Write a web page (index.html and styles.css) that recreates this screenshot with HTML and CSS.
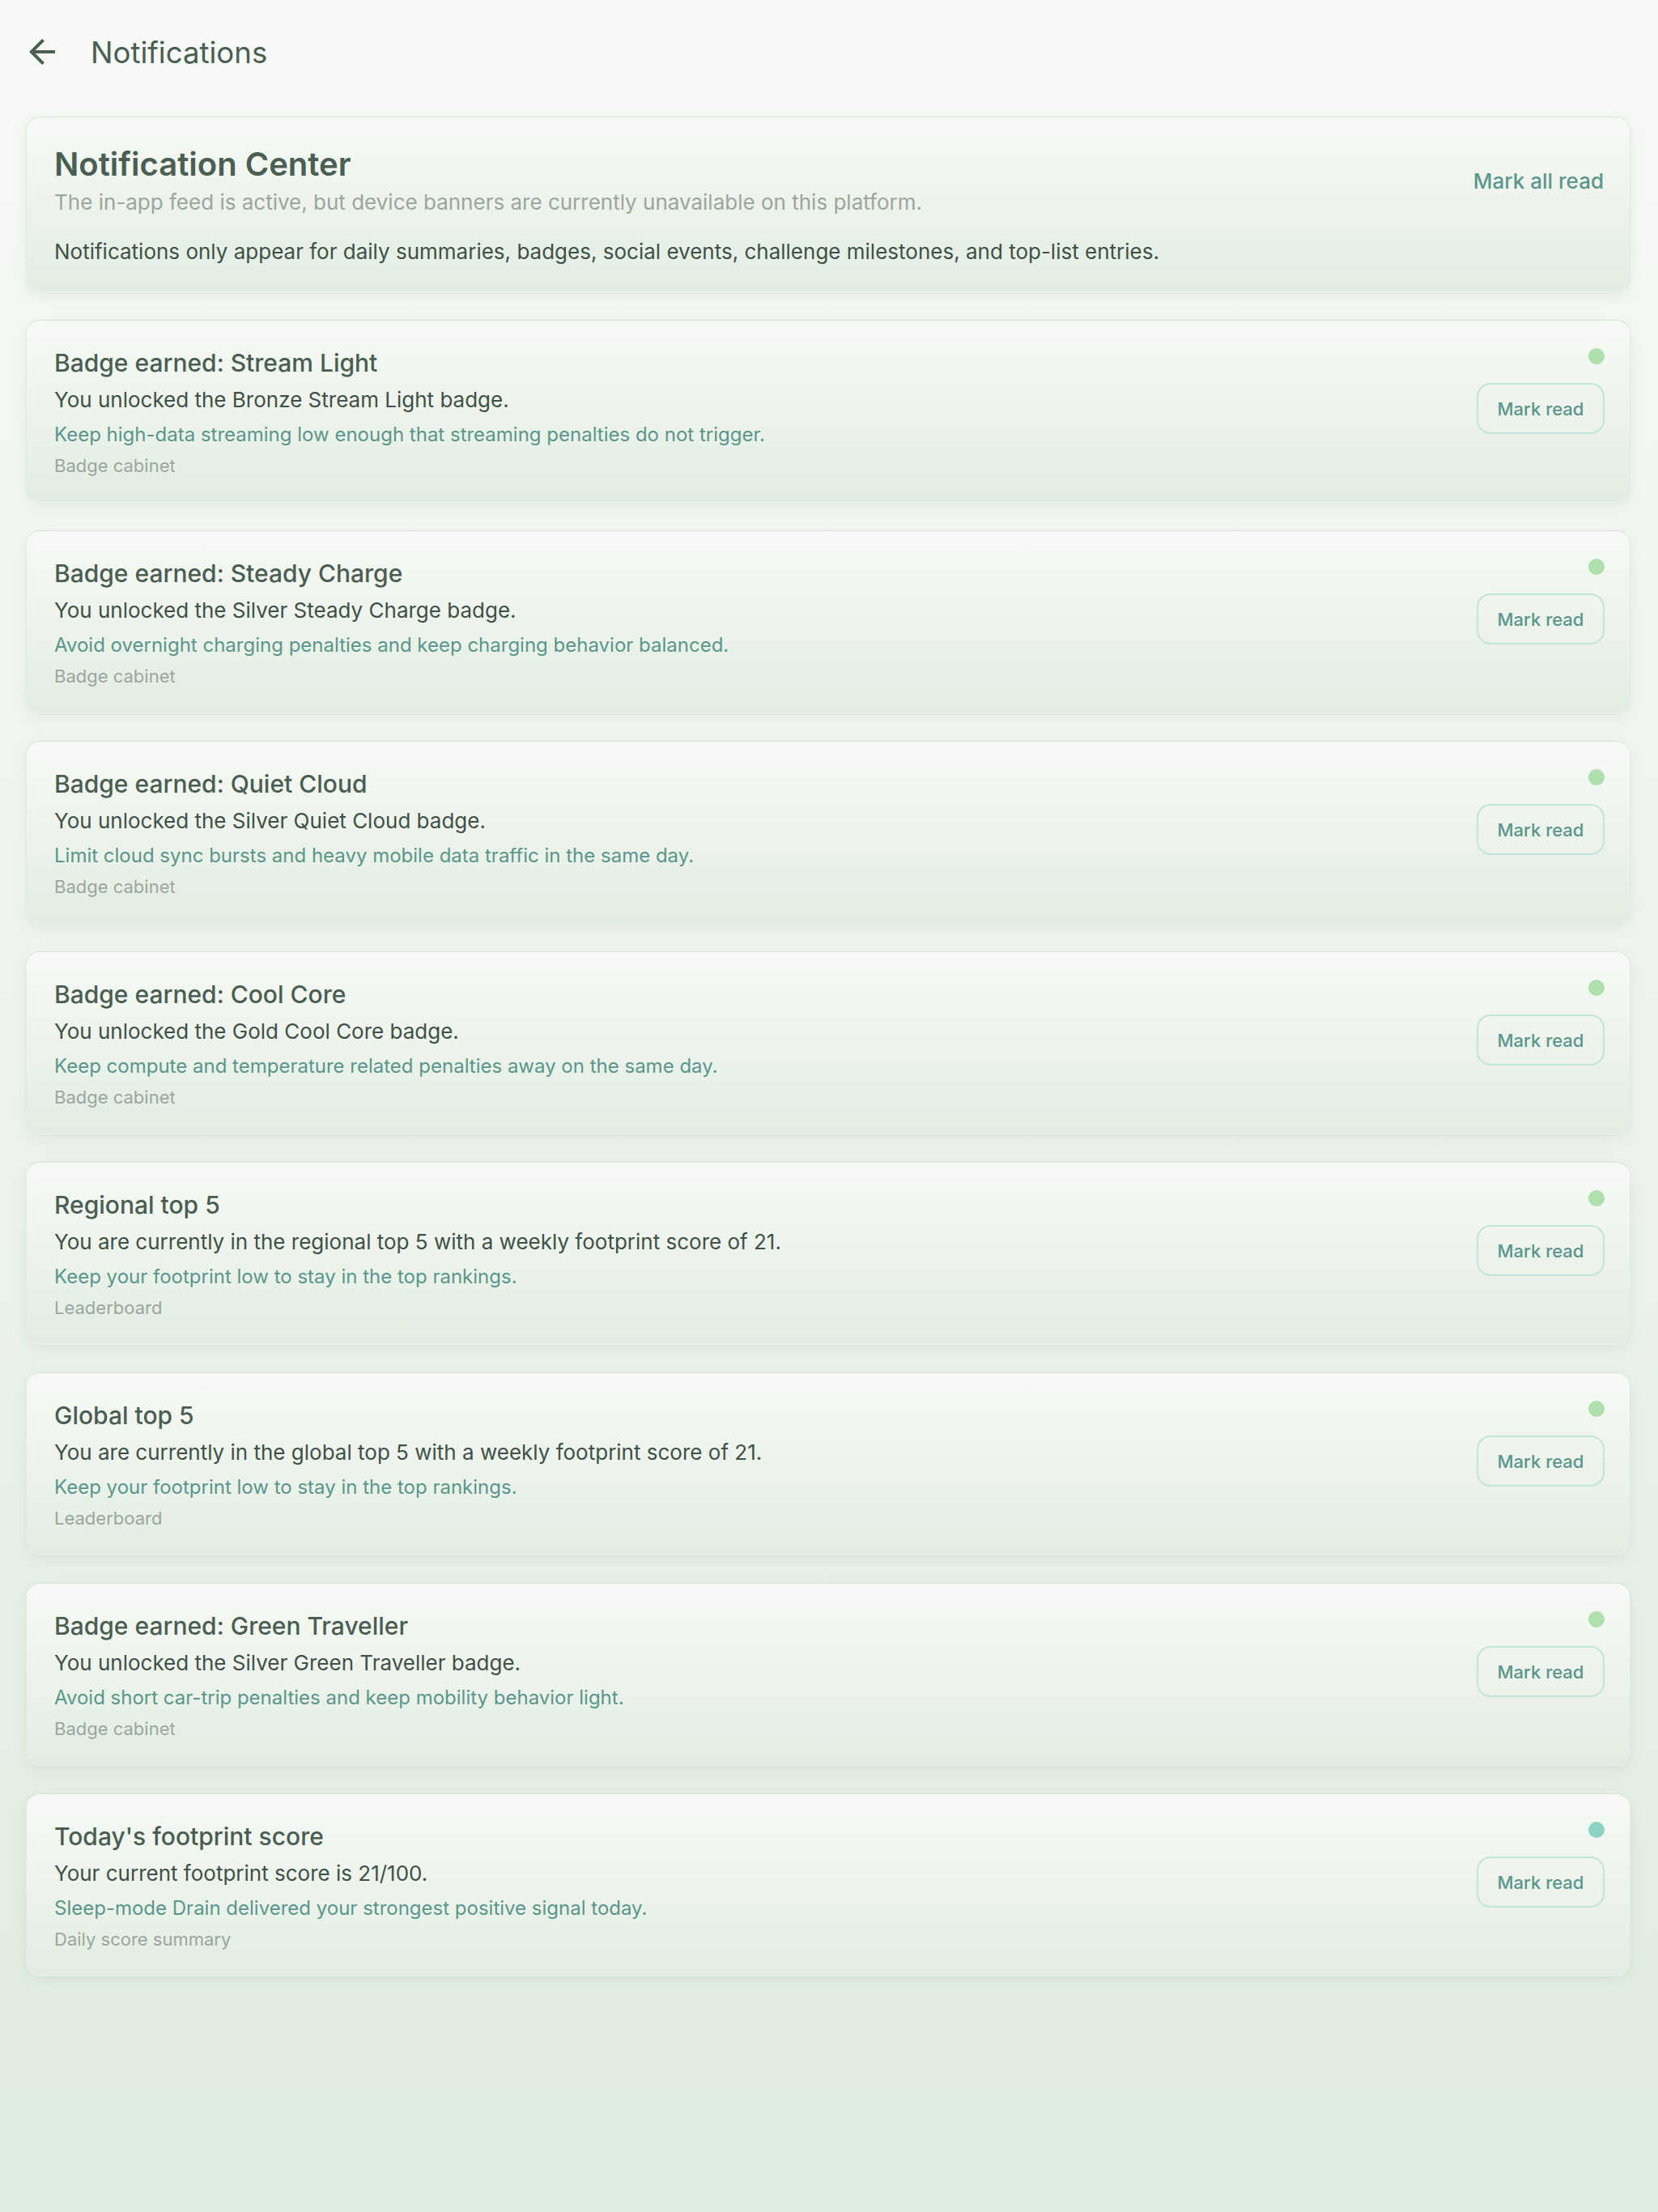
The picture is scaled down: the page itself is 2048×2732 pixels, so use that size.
FILE: index.html
```html
<!DOCTYPE html>
<html lang="en">
<head>
<meta charset="utf-8">
<title>Notifications</title>
<link rel="stylesheet" href="styles.css">
</head>
<body>
<div class="page">
  <header class="appbar">
    <button class="back" aria-label="Back">
      <svg viewBox="0 0 24 24" width="48" height="48"><path d="M20 11H7.83l5.59-5.59L12 4l-8 8 8 8 1.41-1.41L7.83 13H20v-2z" fill="currentColor"/></svg>
    </button>
    <h1 class="appbar-title">Notifications</h1>
  </header>

  <main class="list">
    <section class="card intro">
      <div class="intro-top">
        <div class="intro-text">
          <h2 class="intro-title">Notification Center</h2>
          <p class="intro-sub">The in-app feed is active, but device banners are currently unavailable on this platform.</p>
        </div>
        <button class="link-btn">Mark all read</button>
      </div>
      <p class="intro-body">Notifications only appear for daily summaries, badges, social events, challenge milestones, and top-list entries.</p>
    </section>

    <article class="card note">
      <div class="note-main">
        <h3 class="note-title">Badge earned: Stream Light</h3>
        <p class="note-body">You unlocked the Bronze Stream Light badge.</p>
        <p class="note-hint">Keep high-data streaming low enough that streaming penalties do not trigger.</p>
        <p class="note-meta">Badge cabinet</p>
      </div>
      <div class="note-side"><span class="dot"></span><button class="mark-btn">Mark read</button></div>
    </article>

    <article class="card note">
      <div class="note-main">
        <h3 class="note-title">Badge earned: Steady Charge</h3>
        <p class="note-body">You unlocked the Silver Steady Charge badge.</p>
        <p class="note-hint">Avoid overnight charging penalties and keep charging behavior balanced.</p>
        <p class="note-meta">Badge cabinet</p>
      </div>
      <div class="note-side"><span class="dot"></span><button class="mark-btn">Mark read</button></div>
    </article>

    <article class="card note">
      <div class="note-main">
        <h3 class="note-title">Badge earned: Quiet Cloud</h3>
        <p class="note-body">You unlocked the Silver Quiet Cloud badge.</p>
        <p class="note-hint">Limit cloud sync bursts and heavy mobile data traffic in the same day.</p>
        <p class="note-meta">Badge cabinet</p>
      </div>
      <div class="note-side"><span class="dot"></span><button class="mark-btn">Mark read</button></div>
    </article>

    <article class="card note">
      <div class="note-main">
        <h3 class="note-title">Badge earned: Cool Core</h3>
        <p class="note-body">You unlocked the Gold Cool Core badge.</p>
        <p class="note-hint">Keep compute and temperature related penalties away on the same day.</p>
        <p class="note-meta">Badge cabinet</p>
      </div>
      <div class="note-side"><span class="dot"></span><button class="mark-btn">Mark read</button></div>
    </article>

    <article class="card note">
      <div class="note-main">
        <h3 class="note-title">Regional top 5</h3>
        <p class="note-body">You are currently in the regional top 5 with a weekly footprint score of 21.</p>
        <p class="note-hint">Keep your footprint low to stay in the top rankings.</p>
        <p class="note-meta">Leaderboard</p>
      </div>
      <div class="note-side"><span class="dot"></span><button class="mark-btn">Mark read</button></div>
    </article>

    <article class="card note">
      <div class="note-main">
        <h3 class="note-title">Global top 5</h3>
        <p class="note-body">You are currently in the global top 5 with a weekly footprint score of 21.</p>
        <p class="note-hint">Keep your footprint low to stay in the top rankings.</p>
        <p class="note-meta">Leaderboard</p>
      </div>
      <div class="note-side"><span class="dot"></span><button class="mark-btn">Mark read</button></div>
    </article>

    <article class="card note">
      <div class="note-main">
        <h3 class="note-title">Badge earned: Green Traveller</h3>
        <p class="note-body">You unlocked the Silver Green Traveller badge.</p>
        <p class="note-hint">Avoid short car-trip penalties and keep mobility behavior light.</p>
        <p class="note-meta">Badge cabinet</p>
      </div>
      <div class="note-side"><span class="dot"></span><button class="mark-btn">Mark read</button></div>
    </article>

    <article class="card note">
      <div class="note-main">
        <h3 class="note-title">Today's footprint score</h3>
        <p class="note-body">Your current footprint score is 21/100.</p>
        <p class="note-hint">Sleep-mode Drain delivered your strongest positive signal today.</p>
        <p class="note-meta">Daily score summary</p>
      </div>
      <div class="note-side"><span class="dot dot-teal"></span><button class="mark-btn">Mark read</button></div>
    </article>
  </main>
</div>
</body>
</html>
```

FILE: styles.css
```css
* { box-sizing: border-box; }

html, body {
  margin: 0;
  padding: 0;
}

body {
  min-height: 100vh;
  background: linear-gradient(180deg, #f7f9f6 0%, #eef4ed 45%, #dfece0 100%);
  font-family: Inter, "Noto Sans", "Liberation Sans", sans-serif;
  color: #3f5047;
}

.page {
  min-height: 100vh;
}

.appbar {
  height: 128px;
  display: flex;
  align-items: center;
  padding-left: 28px;
}

.back {
  width: 48px;
  height: 48px;
  padding: 0;
  border: 0;
  background: none;
  color: #4a5e52;
  display: flex;
  align-items: center;
  justify-content: center;
}

.back svg { display: block; }

.appbar-title {
  margin: 2px 0 0 36px;
  font-size: 36.6px;
  line-height: 45px;
  font-weight: 400;
  color: #4a5e52;
}

.list {
  padding: 16px 34px 80px 32px;
  display: flex;
  flex-direction: column;
  gap: 34px;
}

.card {
  border-radius: 17px;
  border: 1px solid #e2ebe3;
  border-top-color: #d5e6d8;
  border-bottom-color: #edf0ed;
  background: linear-gradient(180deg, #f7f9f6 0%, #eef4ed 45%, #e1ede2 100%);
  box-shadow: 0 6px 20px rgba(70, 105, 80, 0.07), 0 1px 3px rgba(70, 105, 80, 0.05);
}

/* intro card */
.intro {
  padding: 33px 32px 33px 34px;
}

.intro-top {
  display: flex;
  align-items: center;
  justify-content: space-between;
}

.intro-title {
  margin: 0;
  font-size: 40px;
  line-height: 49px;
  font-weight: 600;
  color: #4a5e52;
}

.intro-sub {
  margin: 7px 0 0;
  font-size: 26px;
  line-height: 31px;
  color: #9ca59f;
}

.intro-body {
  margin: 29px 0 0;
  font-size: 26px;
  line-height: 33px;
  color: #3f5047;
}

.link-btn {
  border: 0;
  background: none;
  padding: 0;
  font-family: inherit;
  font-size: 26px;
  line-height: 33px;
  font-weight: 500;
  color: #5a968b;
  margin-top: 4px;
}

/* notification cards */
.note {
  display: flex;
  justify-content: space-between;
  align-items: flex-start;
  padding: 34px 31px 31px 34px;
}

.note-main {
  display: flex;
  flex-direction: column;
}

.note-main p { margin: 0; }

.note-title {
  margin: 0;
  font-size: 30px;
  line-height: 37px;
  font-weight: 500;
  color: #4a5d51;
}

.note-body {
  margin-top: 10px !important;
  font-size: 26px;
  line-height: 33px;
  color: #3f5047;
}

.note-hint {
  margin-top: 12px !important;
  font-size: 24px;
  line-height: 29px;
  color: #5a968b;
}

.note-meta {
  margin-top: 11px !important;
  font-size: 22px;
  line-height: 27px;
  color: #9ca59f;
}

.note-side {
  display: flex;
  flex-direction: column;
  align-items: flex-end;
  gap: 23px;
}

.dot {
  width: 20px;
  height: 20px;
  border-radius: 50%;
  background: #aee0ad;
}

.dot-teal { background: #88d3c4; }

.mark-btn {
  width: 158px;
  height: 63px;
  border: 2px solid #c1e4db;
  border-radius: 17px;
  background: transparent;
  font-family: inherit;
  font-size: 22px;
  font-weight: 500;
  color: #5a968b;
  padding: 0;
}
```
